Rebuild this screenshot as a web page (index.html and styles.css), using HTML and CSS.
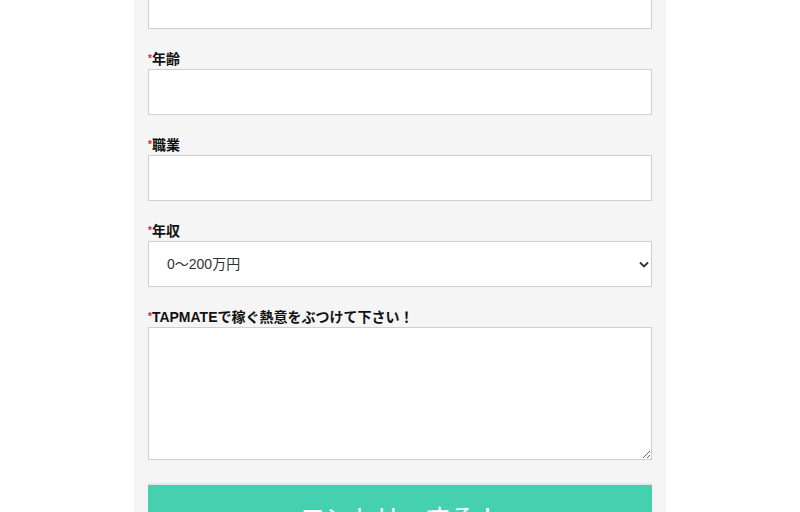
FILE: index.html
```html
<!DOCTYPE html>
<html lang="ja">
<head>
<meta charset="utf-8">
<link rel="stylesheet" href="styles.css">
</head>
<body>
<div class="panel">
  <div class="field field-first">
    <input class="control" type="text">
  </div>
  <div class="field">
    <label class="label"><span class="req">*</span>年齢</label>
    <input class="control" type="text">
  </div>
  <div class="field">
    <label class="label"><span class="req">*</span>職業</label>
    <input class="control" type="text">
  </div>
  <div class="field">
    <label class="label"><span class="req">*</span>年収</label>
    <div class="select-wrap">
      <select class="control select">
        <option>0〜200万円</option>
        <option>200〜400万円</option>
      </select>
      <svg class="chevron" width="10" height="7" viewBox="0 0 10 7"><path d="M1 1.5 L5 5.5 L9 1.5" fill="none" stroke="#333" stroke-width="1.8"/></svg>
    </div>
  </div>
  <div class="field">
    <label class="label"><span class="req">*</span>TAPMATEで稼ぐ熱意をぶつけて下さい！</label>
    <textarea class="control textarea"></textarea>
  </div>
  <button class="submit" type="button">エントリーする！</button>
</div>
</body>
</html>
```
FILE: styles.css
```css
html, body {
  margin: 0;
  padding: 0;
  background: #ffffff;
  overflow: hidden;
}
body {
  font-family: "Liberation Sans", "Noto Sans CJK JP", sans-serif;
  color: #111;
}
.panel {
  width: 504px;
  margin: 0 auto;
  padding: 0 14px 40px;
  background: #f5f5f5;
  display: flex;
  flex-direction: column;
  min-height: 600px;
}
.field {
  display: flex;
  flex-direction: column;
  margin-bottom: 22px;
}
.field-first {
  margin-top: -17px;
}
.label {
  display: block;
  height: 17px;
  overflow: visible;
  font-size: 14px;
  font-weight: bold;
  line-height: 17px;
  margin-bottom: 1px;
  color: #111;
  white-space: nowrap;
}
.req {
  color: #e0203a;
  font-size: 10px;
  font-weight: bold;
  line-height: 10px;
  vertical-align: 2px;
}
.control {
  box-sizing: border-box;
  width: 504px;
  height: 46px;
  border: 1px solid #cfcfcf;
  background: #fff;
  margin: 0;
  padding: 0 18px;
  font-family: "Liberation Sans", "Noto Sans CJK JP", sans-serif;
  font-size: 14px;
  color: #333;
  border-radius: 0;
  outline: none;
}
.select-wrap {
  position: relative;
}
.select {
  appearance: none;
  -webkit-appearance: none;
}
.chevron {
  position: absolute;
  right: 3px;
  top: 20px;
}
.textarea {
  height: 133px;
  padding: 10px 18px;
  resize: vertical;
  display: block;
}
.submit {
  box-sizing: border-box;
  width: 504px;
  height: 76px;
  margin-top: 1px;
  border: none;
  border-top: 2px solid #dfe9e6;
  background: #45d1b0;
  color: #fff;
  font-family: "Noto Sans CJK JP", sans-serif;
  font-size: 25px;
  line-height: 40px;
  padding: 11px 0 0;
  text-align: center;
  display: flex;
  justify-content: center;
  align-items: flex-start;
}
```
